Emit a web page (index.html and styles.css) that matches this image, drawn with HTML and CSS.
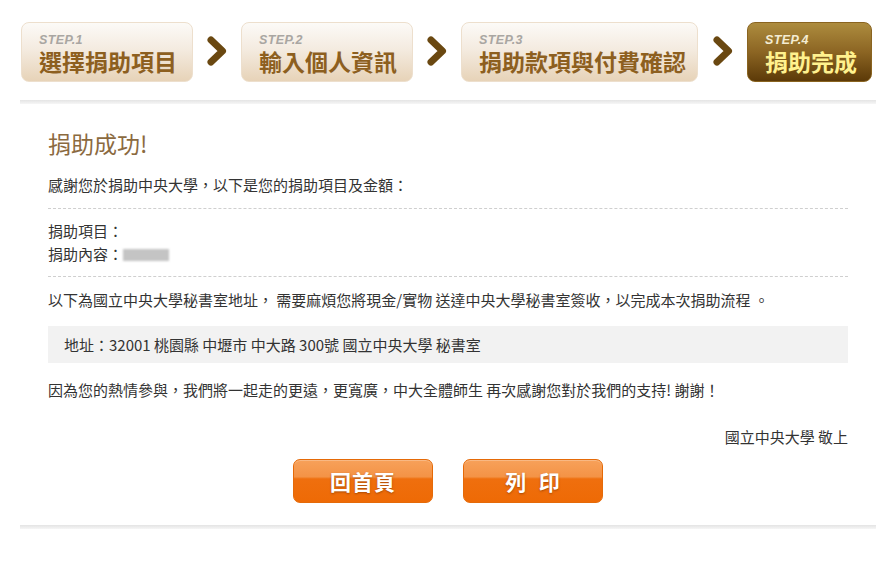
FILE: index.html
```html
<!DOCTYPE html>
<html lang="zh-Hant">
<head>
<meta charset="utf-8">
<title>捐助完成</title>
<link rel="stylesheet" href="styles.css">
</head>
<body>
<div class="page">
  <div class="steps">
    <div class="step s1"><span class="step-no">STEP.1</span><span class="step-name">選擇捐助項目</span></div>
    <div class="arrow"><svg width="20" height="30" viewBox="0 0 20 30"><path d="M4 4 L15.5 15 L4 26" fill="none" stroke="#6a4811" stroke-width="7" stroke-linecap="round" stroke-linejoin="round"/></svg></div>
    <div class="step s2"><span class="step-no">STEP.2</span><span class="step-name">輸入個人資訊</span></div>
    <div class="arrow"><svg width="20" height="30" viewBox="0 0 20 30"><path d="M4 4 L15.5 15 L4 26" fill="none" stroke="#6a4811" stroke-width="7" stroke-linecap="round" stroke-linejoin="round"/></svg></div>
    <div class="step s3"><span class="step-no">STEP.3</span><span class="step-name">捐助款項與付費確認</span></div>
    <div class="arrow"><svg width="20" height="30" viewBox="0 0 20 30"><path d="M4 4 L15.5 15 L4 26" fill="none" stroke="#6a4811" stroke-width="7" stroke-linecap="round" stroke-linejoin="round"/></svg></div>
    <div class="step s4 active"><span class="step-no">STEP.4</span><span class="step-name">捐助完成</span></div>
  </div>
  <div class="sep top-sep"></div>
  <div class="content">
    <h1 class="title">捐助成功!</h1>
    <p class="line intro">感謝您於捐助中央大學，以下是您的捐助項目及金額：</p>
    <div class="dash d1"></div>
    <div class="items">
      <p class="line">捐助項目：</p>
      <p class="line">捐助內容：<span class="blur"></span></p>
    </div>
    <div class="dash d2"></div>
    <p class="line para1">以下為國立中央大學秘書室地址， 需要麻煩您將現金/實物 送達中央大學秘書室簽收，以完成本次捐助流程 。</p>
    <div class="address">地址：32001 桃園縣 中壢市 中大路 300號 國立中央大學 秘書室</div>
    <p class="line para2">因為您的熱情參與，我們將一起走的更遠，更寬廣，中大全體師生 再次感謝您對於我們的支持! 謝謝！</p>
    <p class="line sign">國立中央大學 敬上</p>
    <div class="buttons">
      <a class="btn">回首頁</a>
      <a class="btn">列&ensp;印</a>
    </div>
  </div>
  <div class="sep bottom-sep"></div>
</div>
</body>
</html>
```
FILE: styles.css
```css
* { box-sizing: border-box; }
html, body { margin: 0; padding: 0; background: #fff; }
body {
  font-family: "Noto Sans CJK TC", "Noto Sans", sans-serif;
  color: #333;
}
.page {
  width: 856px;
  margin: 0 20px;
}
.steps {
  display: flex;
  padding-top: 22px;
  padding-left: 1px;
  height: 82px;
}
.step {
  height: 60px;
  border-radius: 8px;
  border: 1px solid #eddfcd;
  background: linear-gradient(to bottom, #fcfaf7 0%, #f4ebe0 45%, #e7d3b8 100%);
  display: flex;
  flex-direction: column;
  padding: 11px 0 0 17px;
}
.s1, .s2 { width: 172px; }
.s3 { width: 237px; }
.s4 { width: 125px; }
.step-no {
  font-family: "Liberation Sans", Arial, sans-serif;
  font-style: italic;
  font-weight: bold;
  font-size: 12.5px;
  line-height: 13px;
  color: #a9a6a2;
  letter-spacing: 0.4px;
}
.step-name {
  font-size: 23px;
  line-height: 27px;
  margin-top: 1px;
  font-weight: 700;
  color: #8d5f1f;
}
.active {
  border: 1px solid #8a6420;
  background: linear-gradient(to bottom, #ad8c3e 0%, #8c6523 50%, #5c3a08 100%);
}
.active .step-no { color: #f4ecd2; }
.active .step-name { color: #fff18e; }
.arrow {
  width: 48px;
  display: flex;
  align-items: center;
  justify-content: center;
  padding-bottom: 2px;
}
.s3 + .arrow { width: 49px; }
.sep {
  height: 4px;
  background: linear-gradient(to bottom, #e4e4e4, #f6f6f6);
}
.top-sep { margin-top: 18px; }
.bottom-sep { margin-top: 22px; }
.content {
  padding: 24px 28px 0;
}
.title {
  margin: 0;
  font-size: 23px;
  line-height: 30px;
  font-weight: 400;
  color: #8b6a3f;
}
.line {
  margin: 0;
  font-size: 15px;
  line-height: 23px;
}
.intro { margin-top: 15px; }
.dash {
  border-top: 1px dashed #cfcfcf;
}
.d1 { margin-top: 12px; }
.items { margin-top: 10px; }
.d2 { margin-top: 11px; }
.para1 { margin-top: 11px; }
.blur {
  display: inline-block;
  width: 46px;
  height: 12px;
  background: #c4c4c4;
  vertical-align: -1px;
  filter: blur(0.8px);
}
.address {
  margin-top: 15px;
  height: 37px;
  line-height: 37px;
  background: #f2f2f2;
  padding-left: 16px;
  font-size: 15px;
}
.para2 { margin-top: 15px; }
.sign {
  margin-top: 24px;
  text-align: right;
}
.buttons {
  margin-top: 11px;
  display: flex;
  justify-content: center;
  gap: 30px;
}
.btn {
  display: flex;
  align-items: center;
  justify-content: center;
  width: 140px;
  height: 44px;
  border-radius: 7px;
  border: 1px solid #e56a08;
  background: linear-gradient(to bottom, #f7a15a 0%, #f49346 40%, #ef6f0e 45%, #ee6a05 100%);
  box-shadow: inset 0 1px 0 rgba(255,255,255,0.25);
  color: #fff;
  font-size: 21px;
  font-weight: 700;
  text-shadow: 0 1px 2px rgba(120,50,0,0.6);
  letter-spacing: 1px;
  cursor: pointer;
}
```
